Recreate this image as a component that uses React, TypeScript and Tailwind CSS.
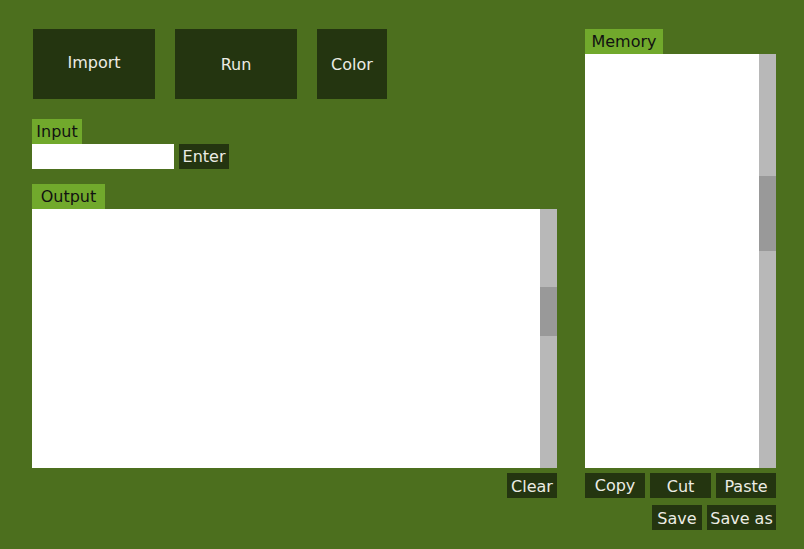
import React from "react";

const font = { fontFamily: '"DejaVu Sans", sans-serif' };

function Scroll({ top, thumb }: { top: number; thumb: number }) {
  return (
    <div className="flex w-[17px] shrink-0 flex-col bg-[#b8b8b8]">
      <div style={{ height: top }} />
      <div className="bg-[#999999]" style={{ height: thumb }} />
    </div>
  );
}

function Btn({ children, w, h = 25, cls = "" }: { children: React.ReactNode; w: number; h?: number; cls?: string }) {
  return (
    <div
      className={`flex items-center justify-center bg-[#243510] text-[16px] text-[#ecece4] ${cls}`}
      style={{ width: w, height: h }}
    >
      {children}
    </div>
  );
}

function Label({ children, w }: { children: React.ReactNode; w: number }) {
  return (
    <div
      className="flex h-[25px] items-center justify-center bg-[#71a92c] text-[16px] text-[#111]"
      style={{ width: w }}
    >
      {children}
    </div>
  );
}

export default function App() {
  return (
    <div className="flex h-[549px] w-[804px] bg-[#4c6f1e]" style={font}>
      <div className="flex w-[525px] flex-col pl-[32px] pt-[29px] box-content">
        <div className="ml-[1px] flex gap-[20px]">
          <Btn w={122} h={70} cls="pb-[3px]">Import</Btn>
          <Btn w={122} h={70} cls="pt-[2px]">Run</Btn>
          <Btn w={70} h={70} cls="pt-[2px]">Color</Btn>
        </div>
        <div className="mt-[20px]">
          <Label w={50}>Input</Label>
        </div>
        <div className="flex items-start gap-[5px]">
          <div className="h-[25px] w-[142px] bg-white" />
          <Btn w={50}>Enter</Btn>
        </div>
        <div className="mt-[15px]">
          <Label w={73}>Output</Label>
        </div>
        <div className="flex h-[259px] w-[525px]">
          <div className="flex-1 bg-white" />
          <Scroll top={78} thumb={49} />
        </div>
        <div className="mt-[5px] flex justify-end">
          <Btn w={50} cls="pt-[2px]">Clear</Btn>
        </div>
      </div>
      <div className="ml-[28px] flex w-[191px] flex-col pt-[29px]">
        <Label w={78}>Memory</Label>
        <div className="flex h-[414px]">
          <div className="flex-1 bg-white" />
          <Scroll top={122} thumb={75} />
        </div>
        <div className="mt-[5px] flex gap-[5px]">
          <Btn w={60}>Copy</Btn>
          <Btn w={61} cls="pt-[2px]">Cut</Btn>
          <Btn w={60} cls="pt-[2px]">Paste</Btn>
        </div>
        <div className="mt-[7px] flex justify-end gap-[5px]">
          <Btn w={50} cls="pt-[2px]">Save</Btn>
          <Btn w={69} cls="pt-[2px]">Save as</Btn>
        </div>
      </div>
    </div>
  );
}
